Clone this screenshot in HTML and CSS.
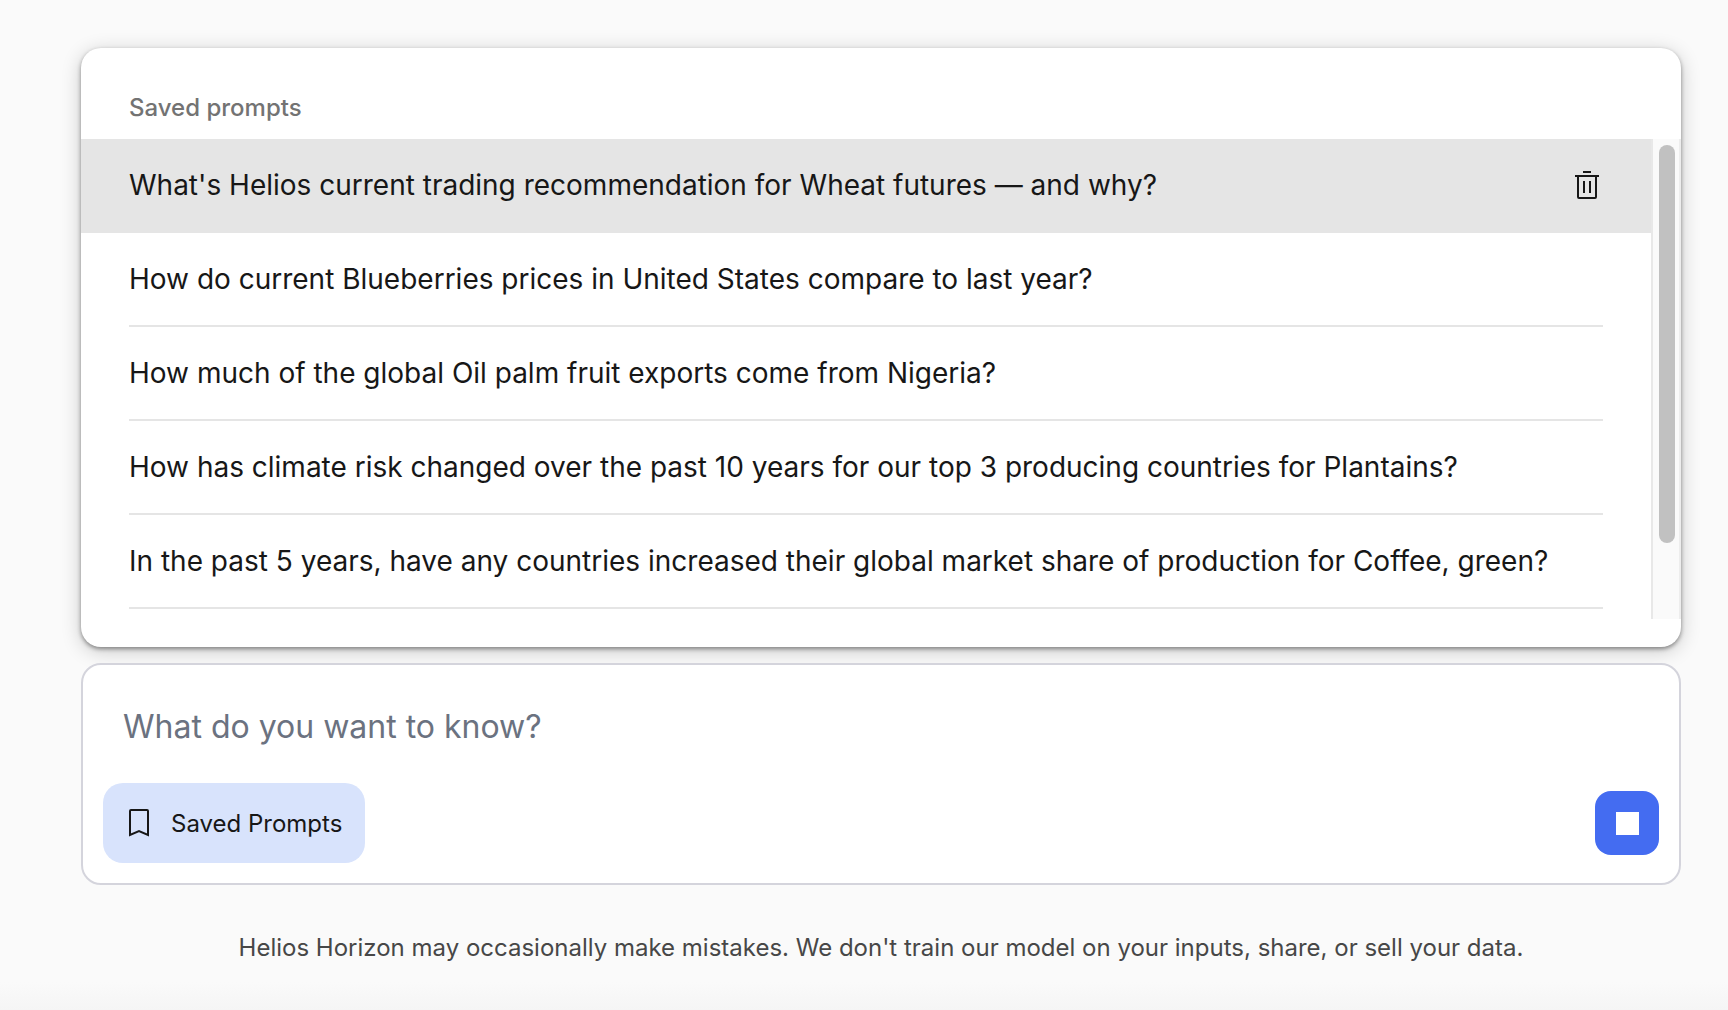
FILE: index.html
```html
<!DOCTYPE html>
<html lang="en">
<head>
    <meta charset="UTF-8">
    <meta name="viewport" content="width=device-width, initial-scale=1.0">
    <title>Helios Horizon</title>
    <link rel="stylesheet" href="styles.css">
</head>
<body>
    <main class="chat">
        <!-- Saved prompts panel -->
        <section class="panel">
            <h2 class="panel-title">Saved prompts</h2>
            <div class="panel-body">
                <ul class="prompt-list">
                    <li class="prompt active">
                        <button class="prompt-text" type="button">What's Helios current trading recommendation for Wheat futures — and why?</button>
                        <button class="delete" type="button" aria-label="Delete prompt">
                            <svg width="32" height="32" viewBox="0 0 32 32" fill="none" stroke="currentColor" stroke-width="2">
                                <path d="M12 2h8M4 6h24M7 6v21q0 1 1 1h16q1 0 1-1V6M13 11v12M19 11v12"/>
                            </svg>
                        </button>
                    </li>
                    <li class="prompt">
                        <button class="prompt-text" type="button">How do current Blueberries prices in United States compare to last year?</button>
                    </li>
                    <li class="prompt">
                        <button class="prompt-text" type="button">How much of the global Oil palm fruit exports come from Nigeria?</button>
                    </li>
                    <li class="prompt">
                        <button class="prompt-text" type="button">How has climate risk changed over the past 10 years for our top 3 producing countries for Plantains?</button>
                    </li>
                    <li class="prompt">
                        <button class="prompt-text" type="button">In the past 5 years, have any countries increased their global market share of production for Coffee, green?</button>
                    </li>
                </ul>
                <div class="scrollbar" aria-hidden="true">
                    <div class="thumb"></div>
                </div>
            </div>
        </section>

        <!-- Question box -->
        <form class="composer">
            <textarea class="question" rows="1" placeholder="What do you want to know?" aria-label="What do you want to know?"></textarea>
            <div class="toolbar">
                <button class="saved-button" type="button">
                    <svg width="32" height="32" viewBox="0 0 32 32" fill="none" stroke="currentColor" stroke-width="2">
                        <path d="M7 28V4q0-1 1-1h16q1 0 1 1v24l-9-4z"/>
                    </svg>
                    <span>Saved Prompts</span>
                </button>
                <button class="stop-button" type="button" aria-label="Stop">
                    <span class="stop-icon"></span>
                </button>
            </div>
        </form>

        <p class="disclaimer">Helios Horizon may occasionally make mistakes. We don't train our model on your inputs, share, or sell your data.</p>
    </main>
</body>
</html>
```
FILE: styles.css
```css
* {
    box-sizing: border-box;
}
body {
    margin: 0;
    min-height: 100vh;
    font-family: Inter, sans-serif;
    color: #171717;
    background: linear-gradient(to top, #f5f5f5, #fafafa 28px);
}
button {
    border: none;
    padding: 0;
    background: none;
    color: inherit;
    font-family: inherit;
    cursor: pointer;
}
svg {
    display: block;
    flex: none;
}
.chat {
    display: flex;
    flex-direction: column;
    gap: 16px;
    padding: 48px 47px 0 81px;
}

/* Saved prompts */
.panel {
    padding: 40px 0 28px;
    background: white;
    border-radius: 20px;
    box-shadow: 0 2px 4px rgba(0, 0, 0, 0.4), 0 4px 20px rgba(0, 0, 0, 0.2);
}
.panel-title {
    margin: 0;
    padding: 0 48px 11px;
    font-size: 24px;
    line-height: 40px;
    font-weight: 500;
    color: #737373;
}
.panel-body {
    display: flex;
    height: 480px;
    overflow: hidden;
}
.prompt-list {
    flex: 1;
    margin: 0;
    padding: 0;
    list-style: none;
}
.prompt {
    display: flex;
    padding: 0 48px;
}
.prompt-text {
    flex: 1;
    height: 94px;
    border-bottom: 2px solid #e5e5e5;
    font-size: 28px;
    text-align: left;
}
.prompt.active {
    background: #e5e5e5;
}
.scrollbar {
    width: 30px;
    padding: 6px 4px 6px 6px;
    background: #fafafa;
    border-left: 2px solid #e8e8e8;
    border-right: 2px solid #ededed;
}
.thumb {
    width: 16px;
    height: 85%;
    border-radius: 8px;
    background: #c1c1c1;
}

/* Question box */
.composer {
    padding: 32px 20px 20px;
    background: white;
    border: 2px solid #d4d4dc;
    border-radius: 20px;
}
.question {
    display: block;
    width: 100%;
    height: 60px;
    margin-bottom: 26px;
    padding: 6px 20px;
    border: none;
    outline: none;
    resize: none;
    background: none;
    font-family: inherit;
    font-size: 32px;
    line-height: 48px;
}
.question::placeholder {
    color: #6b7280;
}
.toolbar {
    display: flex;
    justify-content: space-between;
    align-items: center;
}
.saved-button {
    display: flex;
    align-items: center;
    gap: 16px;
    height: 80px;
    padding: 0 23px 0 20px;
    border-radius: 20px;
    background: #d8e3fc;
    font-size: 24px;
}
.stop-button {
    display: flex;
    align-items: center;
    justify-content: center;
    width: 64px;
    height: 64px;
    border-radius: 16px;
    background: #446cf1;
}
.stop-icon {
    width: 23px;
    height: 23px;
    background: white;
}
.disclaimer {
    margin: 28px 0 0;
    font-size: 24px;
    line-height: 38px;
    text-align: center;
    color: #474747;
}
```
